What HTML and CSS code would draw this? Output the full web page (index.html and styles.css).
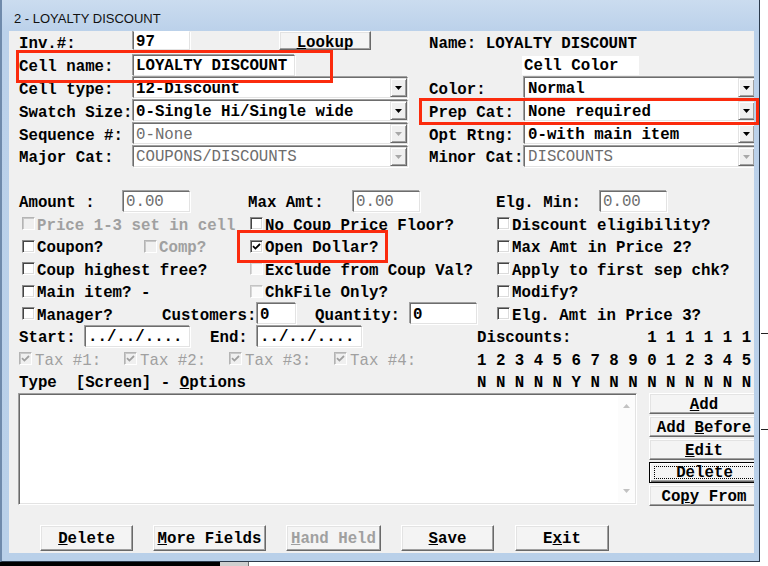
FILE: index.html
```html
<!DOCTYPE html>
<html lang="en">
<head>
    <meta charset="UTF-8">
    <meta name="viewport" content="width=device-width, initial-scale=1.0">
    <title>2 - LOYALTY DISCOUNT</title>
    <link rel="stylesheet" href="styles.css">
</head>
<body>

<div class="screen">
    <div class="top">
        <div class="window">
            <div class="titlebar">2 - LOYALTY DISCOUNT</div>

            <div class="client">
                <!-- item header -->
                <div class="upper">
                    <div class="row">
                        <span class="lbl l-wide">Inv.#:</span>
                        <span class="field inv">97</span>
                        <button class="btn lookup"><u>L</u>ookup</button>
                        <span class="lbl name">Name: LOYALTY DISCOUNT</span>
                    </div>
                    <div class="row">
                        <span class="lbl l-wide">Cell name:</span>
                        <span class="field cellname">LOYALTY DISCOUNT</span>
                        <span class="cell-color">Cell Color</span>
                    </div>
                    <div class="row">
                        <span class="lbl l-wide">Cell type:</span>
                        <span class="combo"><span class="val">12-Discount</span><span class="drop"><svg width="7" height="4" viewBox="0 0 7 4"><path d="M0 0h7L3.5 4z"/></svg></span></span>
                        <span class="lbl l-right">Color:</span>
                        <span class="combo wide"><span class="val">Normal</span><span class="drop"><svg width="7" height="4" viewBox="0 0 7 4"><path d="M0 0h7L3.5 4z"/></svg></span></span>
                    </div>
                    <div class="row">
                        <span class="lbl l-wide">Swatch Size:</span>
                        <span class="combo"><span class="val">0-Single Hi/Single wide</span><span class="drop"><svg width="7" height="4" viewBox="0 0 7 4"><path d="M0 0h7L3.5 4z"/></svg></span></span>
                        <span class="lbl l-right">Prep Cat:</span>
                        <span class="combo wide"><span class="val">None required</span><span class="drop"><svg width="7" height="4" viewBox="0 0 7 4"><path d="M0 0h7L3.5 4z"/></svg></span></span>
                    </div>
                    <div class="row">
                        <span class="lbl l-wide">Sequence #:</span>
                        <span class="combo off"><span class="val">0-None</span><span class="drop"><svg width="7" height="4" viewBox="0 0 7 4"><path d="M0 0h7L3.5 4z"/></svg></span></span>
                        <span class="lbl l-right">Opt Rtng:</span>
                        <span class="combo wide"><span class="val">0-with main item</span><span class="drop"><svg width="7" height="4" viewBox="0 0 7 4"><path d="M0 0h7L3.5 4z"/></svg></span></span>
                    </div>
                    <div class="row">
                        <span class="lbl l-wide">Major Cat:</span>
                        <span class="combo off"><span class="val">COUPONS/DISCOUNTS</span><span class="drop"><svg width="7" height="4" viewBox="0 0 7 4"><path d="M0 0h7L3.5 4z"/></svg></span></span>
                        <span class="lbl l-right">Minor Cat:</span>
                        <span class="combo wide off"><span class="val">DISCOUNTS</span><span class="drop"><svg width="7" height="4" viewBox="0 0 7 4"><path d="M0 0h7L3.5 4z"/></svg></span></span>
                    </div>
                </div>

                <!-- discount options -->
                <div class="lower">
                    <div class="row">
                        <span class="lbl l-amt">Amount :</span>
                        <span class="field num off">0.00</span>
                        <span class="lbl l-max">Max Amt:</span>
                        <span class="field num off">0.00</span>
                        <span class="lbl l-elg">Elg. Min:</span>
                        <span class="field num off">0.00</span>
                    </div>
                    <div class="row">
                        <span class="cb c1 off"><span class="box"></span>Price 1-3 set in cell</span>
                        <span class="cb c2"><span class="box"></span>No Coup Price Floor?</span>
                        <span class="cb"><span class="box"></span>Discount eligibility?</span>
                    </div>
                    <div class="row">
                        <span class="c1 pair">
                            <span class="cb coupon"><span class="box"></span>Coupon?</span>
                            <span class="cb off"><span class="box"></span>Comp?</span>
                        </span>
                        <span class="cb c2"><span class="box"><svg width="9" height="9" viewBox="0 0 9 9"><path d="M1 4.2l2.4 2.4L8 2" fill="none" stroke="currentColor" stroke-width="1.8"/></svg></span>Open Dollar?</span>
                        <span class="cb"><span class="box"></span>Max Amt in Price 2?</span>
                    </div>
                    <div class="row">
                        <span class="cb c1"><span class="box"></span>Coup highest free?</span>
                        <span class="cb c2"><span class="box dim"></span>Exclude from Coup Val?</span>
                        <span class="cb"><span class="box"></span>Apply to first sep chk?</span>
                    </div>
                    <div class="row">
                        <span class="cb c1"><span class="box"></span>Main item? -</span>
                        <span class="cb c2"><span class="box dim"></span>ChkFile Only?</span>
                        <span class="cb"><span class="box"></span>Modify?</span>
                    </div>
                    <div class="row">
                        <span class="cb manager"><span class="box"></span>Manager?</span>
                        <span class="lbl l-cust">Customers:</span>
                        <span class="field cust">0</span>
                        <span class="lbl l-qty">Quantity:</span>
                        <span class="field num">0</span>
                        <span class="cb elg3"><span class="box"></span>Elg. Amt in Price 3?</span>
                    </div>
                    <div class="row">
                        <span class="lbl l-start">Start:</span>
                        <span class="field date">../../....</span>
                        <span class="lbl l-end">End:</span>
                        <span class="field date">../../....</span>
                        <span class="lbl disc">Discounts:        1 1 1 1 1 1</span>
                    </div>
                    <div class="row">
                        <span class="cb tax"><span class="box"><svg width="9" height="9" viewBox="0 0 9 9"><path d="M1 4.2l2.4 2.4L8 2" fill="none" stroke="currentColor" stroke-width="1.8"/></svg></span>Tax #1:</span>
                        <span class="cb tax"><span class="box"><svg width="9" height="9" viewBox="0 0 9 9"><path d="M1 4.2l2.4 2.4L8 2" fill="none" stroke="currentColor" stroke-width="1.8"/></svg></span>Tax #2:</span>
                        <span class="cb tax"><span class="box"><svg width="9" height="9" viewBox="0 0 9 9"><path d="M1 4.2l2.4 2.4L8 2" fill="none" stroke="currentColor" stroke-width="1.8"/></svg></span>Tax #3:</span>
                        <span class="cb tax"><span class="box"><svg width="9" height="9" viewBox="0 0 9 9"><path d="M1 4.2l2.4 2.4L8 2" fill="none" stroke="currentColor" stroke-width="1.8"/></svg></span>Tax #4:</span>
                        <span class="lbl digits">1 2 3 4 5 6 7 8 9 0 1 2 3 4 5</span>
                    </div>
                    <div class="row">
                        <span class="lbl type">Type  [Screen] - <u>O</u>ptions</span>
                        <span class="lbl">N N N N N Y N N N N N N N N N</span>
                    </div>
                </div>

                <!-- screen options list -->
                <div class="list-area">
                    <div class="listbox">
                        <div class="list-body"></div>
                        <div class="vscroll">
                            <svg width="7" height="4" viewBox="0 0 7 4"><path d="M0 4h7L3.5 0z"/></svg>
                            <svg width="7" height="4" viewBox="0 0 7 4"><path d="M0 0h7L3.5 4z"/></svg>
                        </div>
                    </div>
                    <div class="side-btns">
                        <button class="btn"><u>A</u>dd</button>
                        <button class="btn">Add <u>B</u>efore</button>
                        <button class="btn"><u>E</u>dit</button>
                        <button class="btn focus"><span class="ring">Delete</span></button>
                        <button class="btn">Co<u>p</u>y From</button>
                    </div>
                </div>

                <div class="bottom-btns">
                    <button class="btn b-del"><u>D</u>elete</button>
                    <button class="btn b-more"><u>M</u>ore Fields</button>
                    <button class="btn b-hand off"><u>H</u>and Held</button>
                    <button class="btn b-save"><u>S</u>ave</button>
                    <button class="btn b-exit">E<u>x</u>it</button>
                </div>
            </div>

            <!-- highlight frames -->
            <div class="mark mark-name"></div>
            <div class="mark mark-prep"></div>
            <div class="mark mark-dollar"></div>
        </div>
        <div class="side">
            <span class="tick t1"></span>
            <span class="tick t2"></span>
        </div>
    </div>
    <div class="under"><span class="dark"></span><span class="mid"></span></div>
</div>

</body>
</html>
```

FILE: styles.css
```css
body { margin: 0; background: #fff; font-family: "Liberation Mono", "DejaVu Sans Mono", monospace; font-size: 15.75px; font-weight: bold; color: #000; }
.screen { width: 768px; height: 566px; overflow: hidden; }
.top { display: flex; }

/* window frame */
.window { position: relative; flex: none; width: 760px; height: 562px; box-sizing: border-box; padding: 0 5px 8px 7px; border-left: 2px solid #6f8aab; border-right: 1px solid #2c3a4c; border-bottom: 1px solid #2c3a4c; background: linear-gradient(#cbdcef, #bbd1ea 31px, #b9d0e9); }
.titlebar { height: 31px; box-sizing: border-box; padding: 11px 0 0 5px; font: 13px/16px "Liberation Sans", Arial, sans-serif; color: #111; }
.client { height: 522px; box-sizing: border-box; padding-left: 10px; background: #f0f0f0; overflow: hidden; }

/* rows */
.row { display: flex; align-items: center; height: 22.8px; white-space: pre; }
.lower { margin-top: 22.2px; }
.lower .row { height: 22.5px; }
.lbl { flex: none; padding-top: 4px; }

/* sunken edit fields */
.field, .combo { flex: none; box-sizing: border-box; height: 21px; display: flex; align-items: center; background: #fff; border: 1px solid; border-color: #6d6d6d #e3e3e3 #e3e3e3 #6d6d6d; box-shadow: -1px -1px 0 #a0a0a0, 1px 1px 0 #fff; }
.field { padding: 2px 0 0 2px; }
.field.off { color: #6d6d6d; font-weight: normal; }

.l-wide { width: 114px; }
.l-right { width: 95px; margin-left: 21px; }
.inv { width: 57px; height: 19px; align-self: flex-start; border-top-color: #fff; }
.lookup { width: 92px; height: 19px; margin-left: 89px; align-self: flex-start; }
.name { margin-left: 58px; }
.cellname { width: 162px; }
.cell-color { flex: none; width: 117px; height: 19px; margin-left: 227px; padding: 2px 0 0 2px; box-sizing: border-box; display: flex; align-items: center; background: #fff; }

/* combo boxes */
.combo { width: 275px; align-items: stretch; }
.combo.wide { width: 232px; }
.combo .val { flex: 1; display: flex; align-items: center; padding: 2px 0 0 2px; }
.combo .drop { flex: none; width: 17px; box-sizing: border-box; display: flex; align-items: center; justify-content: center; padding-top: 1px; background: #f0f0f0; border: 1px solid; border-color: #e3e3e3 #696969 #696969 #e3e3e3; box-shadow: inset 1px 1px #fff, inset -1px -1px #a0a0a0; }
.combo.wide .val { padding-left: 3px; }
.combo.off .val { color: #6d6d6d; font-weight: normal; }
.combo.off .drop svg { fill: #a8a8a8; }

/* amount line */
.l-amt { width: 104px; }
.num { width: 67px; }
.l-max { width: 105px; margin-left: 58px; }
.l-elg { width: 104px; margin-left: 76px; }

/* check boxes: text sits a little lower than the box */
.cb { flex: none; display: flex; align-items: center; align-self: stretch; padding-top: 4px; box-sizing: border-box; }
.box { flex: none; box-sizing: border-box; width: 13px; height: 13px; margin: -4px 2px 0 3px; display: flex; align-items: center; justify-content: center; background: #fff; border: 1px solid; border-color: #8a8a8a #fff #fff #8a8a8a; box-shadow: inset 1px 1px #454545, inset -1px -1px #dcdcdc; color: #000; }
.box.dim { border-color: #c4c4c4 #fff #fff #c4c4c4; box-shadow: inset 1px 1px #d8d8d8; background: #fafafa; }
.cb.off { color: #a0a0a0; }
.cb.off .box { background: #f0f0f0; border-color: #b4b4b4 #fff #fff #b4b4b4; box-shadow: inset 1px 1px #c8c8c8; }
.c1 { width: 228px; }
.c2 { width: 247px; }
.pair { display: flex; flex: none; align-self: stretch; }
.coupon { width: 122px; }

.manager { width: 143px; }
.l-cust { width: 95px; }
.cust { width: 39px; }
.l-qty { width: 95px; margin-left: 19px; }
.elg3 { margin-left: 17px; }

.l-start { width: 66px; }
.date { width: 105px; }
.l-end { width: 47px; margin-left: 20px; }
.disc { margin-left: 115px; }

.tax { width: 105px; color: #a0a0a0; font-weight: normal; }
.tax .box { margin: -4px 3px 0 0; background: #f0f0f0; border-color: #b4b4b4 #fff #fff #b4b4b4; box-shadow: inset 1px 1px #c8c8c8; color: #a0a0a0; }
.digits { margin-left: 38px; }
.type { width: 458px; }

/* list with side buttons */
.list-area { display: flex; margin: 0.5px 0 0 -1px; }
.listbox { flex: none; display: flex; width: 619px; height: 112px; box-sizing: border-box; background: #fff; border: 1px solid; border-color: #a0a0a0 #fff #fff #a0a0a0; box-shadow: inset 1px 1px #696969, inset -1px -1px #e3e3e3; }
.list-body { flex: 1; }
.vscroll { flex: none; width: 17px; margin: 2px 1px 2px 0; display: flex; flex-direction: column; justify-content: space-between; align-items: center; padding: 8px 0 9px; box-sizing: border-box; background: #fcfcfc; fill: #c2c2c2; }
.side-btns { flex: none; display: flex; flex-direction: column; gap: 2px; width: 110px; margin-left: 12px; }
.side-btns .btn { height: 21px; }

/* raised buttons */
.btn { flex: none; box-sizing: border-box; padding: 2px 0 0; font: inherit; color: #000; background: #f4f4f4; border: 1px solid; border-color: #fff #696969 #696969 #fff; box-shadow: inset -1px -1px #a0a0a0, inset 1px 1px #e3e3e3; white-space: pre; }
.btn.off { color: #a0a0a0; }
.btn.focus { padding: 3px 3px 3px 4px; border-color: #000; box-shadow: inset 1px 1px #fff, inset -1px -1px #696969, inset -2px -2px #a0a0a0; }
.ring { display: flex; align-items: center; justify-content: center; height: 100%; box-sizing: border-box; padding-top: 2px; border: 1px dotted #000; }

.bottom-btns { display: flex; gap: 20px; margin: 19px 0 0 21px; }
.bottom-btns .btn { height: 26px; }
.b-del { width: 93px; }
.b-more { width: 113px; }
.b-hand { width: 95px; }
.b-save { width: 93px; }
.b-exit { width: 94px; margin-left: 1px; }

/* red highlight frames */
.mark { position: absolute; box-sizing: border-box; border: 3px solid #fb2b0d; }
.mark-name { left: 14px; top: 50px; width: 317px; height: 33px; }
.mark-prep { left: 417px; top: 98px; width: 340px; height: 27px; }
.mark-dollar { left: 235px; top: 230px; width: 151px; height: 33px; }

/* desktop around the window */
.side { position: relative; flex: 1; background: #fff; }
.tick { position: absolute; left: 1px; right: 0; height: 1px; background: #222; }
.t1 { top: 333px; }
.t2 { top: 429px; }
.under { display: flex; height: 4px; }
.under .dark { width: 220px; background: #000; }
.under .mid { width: 28px; background: #cfcfcf; border-right: 1px solid #707070; }
```
